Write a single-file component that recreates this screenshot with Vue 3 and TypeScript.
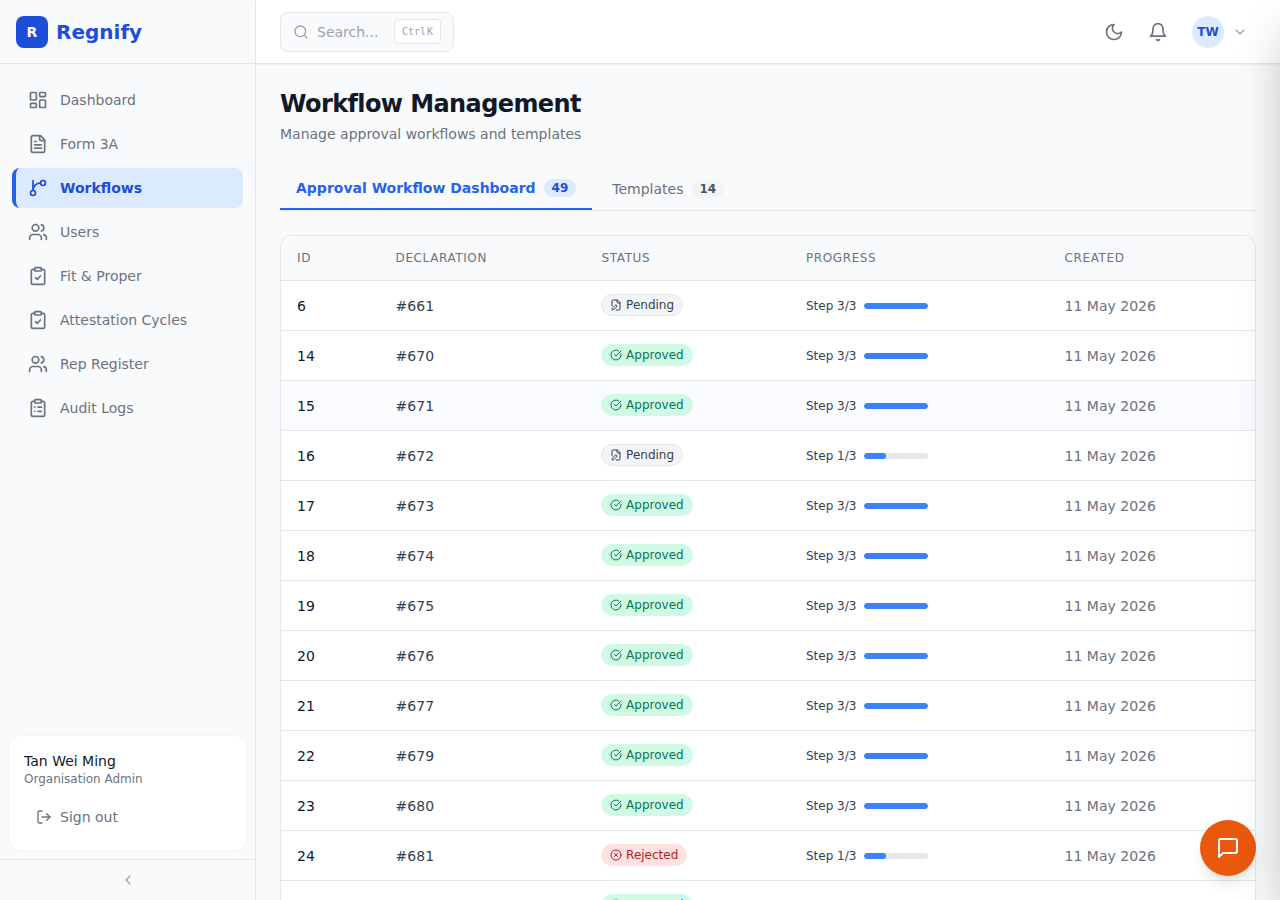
<template>
  <div class="shell">
    <aside class="sidebar">
      <div class="brand">
        <span class="logo">R</span>
        <span class="brand-name">Regnify</span>
      </div>
      <nav class="nav">
        <a v-for="item in navItems" :key="item.label" class="nav-item" :class="{ active: item.active }">
          <svg class="nav-icon" viewBox="0 0 24 24" fill="none" stroke="currentColor" stroke-width="2" stroke-linecap="round" stroke-linejoin="round" v-html="icons[item.icon]"></svg>
          <span>{{ item.label }}</span>
        </a>
      </nav>
      <div class="user-card">
        <div class="user-name">Tan Wei Ming</div>
        <div class="user-role">Organisation Admin</div>
        <a class="sign-out">
          <svg class="nav-icon small" viewBox="0 0 24 24" fill="none" stroke="currentColor" stroke-width="2" stroke-linecap="round" stroke-linejoin="round">
            <path d="M9 21H5a2 2 0 0 1-2-2V5a2 2 0 0 1 2-2h4" />
            <path d="m16 17 5-5-5-5" />
            <path d="M21 12H9" />
          </svg>
          <span>Sign out</span>
        </a>
      </div>
      <div class="collapse">
        <svg viewBox="0 0 24 24" fill="none" stroke="currentColor" stroke-width="2" stroke-linecap="round" stroke-linejoin="round"><path d="m15 18-6-6 6-6" /></svg>
      </div>
    </aside>

    <div class="main">
      <header class="topbar">
        <div class="search">
          <svg viewBox="0 0 24 24" fill="none" stroke="currentColor" stroke-width="2" stroke-linecap="round" stroke-linejoin="round"><circle cx="11" cy="11" r="8" /><path d="m21 21-4.3-4.3" /></svg>
          <span class="search-text">Search...</span>
          <kbd>Ctrl K</kbd>
        </div>
        <div class="top-actions">
          <svg class="top-icon" viewBox="0 0 24 24" fill="none" stroke="currentColor" stroke-width="2" stroke-linecap="round" stroke-linejoin="round"><path d="M12 3a6 6 0 0 0 9 9 9 9 0 1 1-9-9Z" /></svg>
          <svg class="top-icon" viewBox="0 0 24 24" fill="none" stroke="currentColor" stroke-width="2" stroke-linecap="round" stroke-linejoin="round"><path d="M6 8a6 6 0 0 1 12 0c0 7 3 9 3 9H3s3-2 3-9" /><path d="M10.3 21a1.94 1.94 0 0 0 3.4 0" /></svg>
          <div class="account">
            <span class="avatar">TW</span>
            <svg class="chev" viewBox="0 0 24 24" fill="none" stroke="currentColor" stroke-width="2" stroke-linecap="round" stroke-linejoin="round"><path d="m6 9 6 6 6-6" /></svg>
          </div>
        </div>
      </header>

      <main class="content">
        <h1>Workflow Management</h1>
        <p class="sub">Manage approval workflows and templates</p>

        <div class="tabs">
          <div class="tab current">Approval Workflow Dashboard <span class="count blue">49</span></div>
          <div class="tab">Templates <span class="count">14</span></div>
        </div>

        <div class="table-card">
          <table>
            <thead>
              <tr>
                <th class="c-id">ID</th>
                <th class="c-decl">Declaration</th>
                <th class="c-status">Status</th>
                <th class="c-prog">Progress</th>
                <th>Created</th>
              </tr>
            </thead>
            <tbody>
              <tr v-for="row in rows" :key="row.id" :class="{ hover: row.id === 15 }">
                <td class="id">{{ row.id }}</td>
                <td class="decl">#{{ row.decl }}</td>
                <td>
                  <span class="badge" :class="row.status.toLowerCase()">
                    <svg viewBox="0 0 24 24" fill="none" stroke="currentColor" stroke-width="2" stroke-linecap="round" stroke-linejoin="round" v-html="statusIcons[row.status]"></svg>
                    {{ row.status }}
                  </span>
                </td>
                <td class="prog">
                  <div class="progress">
                    <span class="step">Step {{ row.step }}/3</span>
                    <span class="track"><span class="fill" :style="{ width: (row.step / 3) * 100 + '%' }"></span></span>
                  </div>
                </td>
                <td class="date">11 May 2026</td>
              </tr>
            </tbody>
          </table>
        </div>
      </main>
    </div>

    <button class="chat">
      <svg viewBox="0 0 24 24" fill="none" stroke="currentColor" stroke-width="2" stroke-linecap="round" stroke-linejoin="round"><path d="M21 15a2 2 0 0 1-2 2H7l-4 4V5a2 2 0 0 1 2-2h14a2 2 0 0 1 2 2z" /></svg>
    </button>
    <div class="drawer"></div>
  </div>
</template>

<script setup lang="ts">
type Status = 'Pending' | 'Approved' | 'Rejected'

interface Row {
  id: number
  decl: number
  status: Status
  step: number
}

const clipboard = '<rect x="8" y="2" width="8" height="4" rx="1" ry="1"/><path d="M16 4h2a2 2 0 0 1 2 2v14a2 2 0 0 1-2 2H6a2 2 0 0 1-2-2V6a2 2 0 0 1 2-2h2"/>'
const usersIcon = '<path d="M16 21v-2a4 4 0 0 0-4-4H6a4 4 0 0 0-4 4v2"/><circle cx="9" cy="7" r="4"/><path d="M22 21v-2a4 4 0 0 0-3-3.87"/><path d="M16 3.13a4 4 0 0 1 0 7.75"/>'

const icons: Record<string, string> = {
  dashboard: '<rect width="7" height="9" x="3" y="3" rx="1"/><rect width="7" height="5" x="14" y="3" rx="1"/><rect width="7" height="9" x="14" y="12" rx="1"/><rect width="7" height="5" x="3" y="16" rx="1"/>',
  file: '<path d="M15 2H6a2 2 0 0 0-2 2v16a2 2 0 0 0 2 2h12a2 2 0 0 0 2-2V7Z"/><path d="M14 2v4a2 2 0 0 0 2 2h4"/><path d="M10 9H8"/><path d="M16 13H8"/><path d="M16 17H8"/>',
  branch: '<path d="M15 6a9 9 0 0 0-9 9V3"/><circle cx="18" cy="6" r="3"/><circle cx="6" cy="18" r="3"/>',
  users: usersIcon,
  check: clipboard + '<path d="m9 14 2 2 4-4"/>',
  list: clipboard + '<path d="M12 11h4"/><path d="M12 16h4"/><path d="M8 11h.01"/><path d="M8 16h.01"/>',
}

const navItems = [
  { label: 'Dashboard', icon: 'dashboard' },
  { label: 'Form 3A', icon: 'file' },
  { label: 'Workflows', icon: 'branch', active: true },
  { label: 'Users', icon: 'users' },
  { label: 'Fit & Proper', icon: 'check' },
  { label: 'Attestation Cycles', icon: 'check' },
  { label: 'Rep Register', icon: 'users' },
  { label: 'Audit Logs', icon: 'list' },
]

const statusIcons: Record<Status, string> = {
  Pending: '<path d="M12.5 22H18a2 2 0 0 0 2-2V7l-5-5H6a2 2 0 0 0-2 2v9.5"/><path d="M14 2v4a2 2 0 0 0 2 2h4"/><path d="M13.378 15.626a1 1 0 1 0-3.004-3.004l-5.01 5.012a2 2 0 0 0-.506.854l-.837 2.87a.5.5 0 0 0 .62.62l2.87-.837a2 2 0 0 0 .854-.506z"/>',
  Approved: '<path d="M21.801 10A10 10 0 1 1 17 3.335"/><path d="m9 11 3 3L22 4"/>',
  Rejected: '<circle cx="12" cy="12" r="10"/><path d="m15 9-6 6"/><path d="m9 9 6 6"/>',
}

const rows: Row[] = [
  { id: 6, decl: 661, status: 'Pending', step: 3 },
  { id: 14, decl: 670, status: 'Approved', step: 3 },
  { id: 15, decl: 671, status: 'Approved', step: 3 },
  { id: 16, decl: 672, status: 'Pending', step: 1 },
  { id: 17, decl: 673, status: 'Approved', step: 3 },
  { id: 18, decl: 674, status: 'Approved', step: 3 },
  { id: 19, decl: 675, status: 'Approved', step: 3 },
  { id: 20, decl: 676, status: 'Approved', step: 3 },
  { id: 21, decl: 677, status: 'Approved', step: 3 },
  { id: 22, decl: 679, status: 'Approved', step: 3 },
  { id: 23, decl: 680, status: 'Approved', step: 3 },
  { id: 24, decl: 681, status: 'Rejected', step: 1 },
  { id: 25, decl: 682, status: 'Approved', step: 3 },
]
</script>

<style>
html, body { margin: 0; height: 100%; overflow: hidden; background: #f9fafb; }
</style>

<style scoped>
.shell {
  display: flex;
  height: 900px;
  overflow: hidden;
  font-family: "DejaVu Sans", sans-serif;
  color: #111827;
  background: #f9fafb;
}
.sidebar {
  flex: 0 0 256px;
  box-sizing: border-box;
  height: 900px;
  display: flex;
  flex-direction: column;
  background: #f9fafb;
  border-right: 1px solid #e5e7eb;
}
.brand {
  flex: 0 0 64px;
  box-sizing: border-box;
  height: 64px;
  display: flex;
  align-items: center;
  gap: 8px;
  padding: 0 16px;
  border-bottom: 1px solid #e5e7eb;
}
.logo {
  width: 32px;
  height: 32px;
  border-radius: 8px;
  background: #1d4ed8;
  color: #fff;
  font-size: 14px;
  font-weight: 700;
  display: flex;
  align-items: center;
  justify-content: center;
}
.brand-name { font-size: 20px; font-weight: 700; color: #1d4ed8; }
.nav {
  flex: 1;
  display: flex;
  flex-direction: column;
  gap: 4px;
  padding: 16px 12px;
}
.nav-item {
  height: 40px;
  box-sizing: border-box;
  display: flex;
  align-items: center;
  gap: 12px;
  padding: 0 16px;
  border-radius: 8px;
  font-size: 14px;
  color: #6b7280;
}
.nav-item.active {
  background: #dbeafe;
  color: #1d4ed8;
  font-weight: 700;
  border-left: 4px solid #2563eb;
  padding-left: 12px;
}
.nav-icon { width: 20px; height: 20px; flex: none; }
.nav-icon.small { width: 16px; height: 16px; }
.user-card {
  margin: 0 8px 8px;
  padding: 15px;
  height: 116px;
  box-sizing: border-box;
  background: #fff;
  border: 1px solid #f3f4f6;
  border-radius: 12px;
}
.user-name { font-size: 14px; line-height: 20px; color: #111827; }
.user-role { font-size: 12px; line-height: 16px; color: #6b7280; }
.sign-out {
  display: flex;
  align-items: center;
  gap: 8px;
  margin-top: 12px;
  padding-left: 12px;
  height: 36px;
  font-size: 14px;
  color: #6b7280;
}
.collapse {
  flex: 0 0 40px;
  display: flex;
  align-items: center;
  justify-content: center;
  border-top: 1px solid #e5e7eb;
  color: #9ca3af;
}
.collapse svg { width: 16px; height: 16px; }
.main { flex: 1; min-width: 0; display: flex; flex-direction: column; }
.topbar {
  flex: 0 0 64px;
  height: 64px;
  box-sizing: border-box;
  display: flex;
  align-items: center;
  justify-content: space-between;
  padding: 0 32px 0 24px;
  background: #fff;
  border-bottom: 1px solid #e5e7eb;
  box-shadow: 0 1px 2px rgba(0, 0, 0, 0.05);
  position: relative;
}
.search {
  width: 174px;
  height: 40px;
  box-sizing: border-box;
  display: flex;
  align-items: center;
  gap: 8px;
  padding: 0 12px;
  background: #f9fafb;
  border: 1px solid #e5e7eb;
  border-radius: 8px;
  color: #9ca3af;
}
.search svg { width: 16px; height: 16px; flex: none; }
.search-text { font-size: 14px; flex: 1; }
kbd {
  width: 47px;
  height: 25px;
  box-sizing: border-box;
  display: flex;
  align-items: center;
  justify-content: center;
  background: #fff;
  border: 1px solid #e5e7eb;
  border-radius: 4px;
  font-family: "DejaVu Sans Mono", monospace;
  font-size: 10px;
  word-spacing: -5px;
}
.top-actions { display: flex; align-items: center; }
.top-icon { width: 20px; height: 20px; color: #6b7280; margin-right: 24px; }
.account { display: flex; align-items: center; gap: 8px; }
.avatar {
  width: 32px;
  height: 32px;
  border-radius: 50%;
  background: #dbeafe;
  color: #1d4ed8;
  font-size: 12px;
  font-weight: 700;
  display: flex;
  align-items: center;
  justify-content: center;
}
.chev { width: 16px; height: 16px; color: #9ca3af; }
.content { flex: 1; padding: 24px; min-height: 0; }
h1 { margin: 0; font-size: 24px; line-height: 32px; font-weight: 700; letter-spacing: -0.6px; color: #111827; }
.sub { margin: 4px 0 0; font-size: 14px; line-height: 20px; color: #6b7280; }
.tabs {
  display: flex;
  gap: 4px;
  margin-top: 24px;
  border-bottom: 1px solid #e5e7eb;
  height: 42px;
}
.tab {
  display: flex;
  align-items: center;
  gap: 8px;
  padding: 0 16px;
  font-size: 14px;
  color: #6b7280;
  height: 42px;
}
.tab.current {
  color: #2563eb;
  font-weight: 700;
  border-bottom: 2px solid #2563eb;
  box-sizing: border-box;
}
.count {
  font-size: 12px;
  font-weight: 700;
  line-height: 16px;
  padding: 1px 8px;
  border-radius: 999px;
  background: #f3f4f6;
  color: #4b5563;
}
.count.blue { background: #dbeafe; color: #1d4ed8; }
.table-card {
  margin-top: 24px;
  background: #fff;
  border: 1px solid #e5e7eb;
  border-radius: 12px;
  overflow: hidden;
  box-shadow: 0 1px 2px rgba(0, 0, 0, 0.05);
}
table { width: 100%; border-collapse: collapse; table-layout: fixed; }
th {
  box-sizing: border-box;
  height: 44px;
  padding: 0 16px;
  text-align: left;
  font-size: 12px;
  font-weight: 400;
  letter-spacing: 0.6px;
  text-transform: uppercase;
  color: #6b7280;
  background: #f9fafb;
  border-bottom: 1px solid #e5e7eb;
}
.c-id { width: 98.6px; }
.c-decl { width: 205.5px; }
.c-status { width: 204.9px; padding-left: 16.5px; }
.c-prog { width: 258.6px; }
td {
  height: 49px;
  padding: 0 16px;
  font-size: 14px;
  border-bottom: 1px solid #e5e7eb;
}
td.id, td.decl, td.prog, td.date { padding-top: 2px; box-sizing: border-box; }
tr.hover td { background: #fafcff; }
.id { color: #111827; }
.decl { color: #374151; }
.date { color: #6b7280; }
.badge {
  display: inline-flex;
  align-items: center;
  gap: 4px;
  height: 22px;
  box-sizing: border-box;
  padding: 0 8px;
  border-radius: 999px;
  font-size: 12px;
  border: 1px solid transparent;
  vertical-align: middle;
}
.badge svg { width: 12px; height: 12px; flex: none; }
.badge.pending { background: #f3f4f6; color: #374151; border-color: #e5e7eb; }
.badge.approved { background: #d1fae5; color: #047857; border-color: #d1fae5; }
.badge.rejected { background: #fee2e2; color: #b91c1c; border-color: #fee2e2; }
.progress { display: flex; align-items: center; gap: 8px; }
.step { font-size: 12px; color: #374151; }
.track { width: 64px; height: 6px; border-radius: 999px; background: #e5e7eb; overflow: hidden; display: block; }
.fill { display: block; height: 100%; background: #3b82f6; border-radius: 999px; }
.chat {
  position: fixed;
  right: 24px;
  bottom: 24px;
  width: 56px;
  height: 56px;
  border: 0;
  padding: 0;
  border-radius: 50%;
  background: #ea580c;
  color: #fff;
  display: flex;
  align-items: center;
  justify-content: center;
  box-shadow: 0 10px 15px -3px rgba(0, 0, 0, 0.1), 0 4px 6px -4px rgba(0, 0, 0, 0.1);
}
.chat svg { width: 24px; height: 24px; }
.drawer {
  position: fixed;
  top: 0;
  left: 100%;
  width: 400px;
  height: 900px;
  background: #fff;
  box-shadow: 0 25px 50px -12px rgba(0, 0, 0, 0.33);
}
</style>
